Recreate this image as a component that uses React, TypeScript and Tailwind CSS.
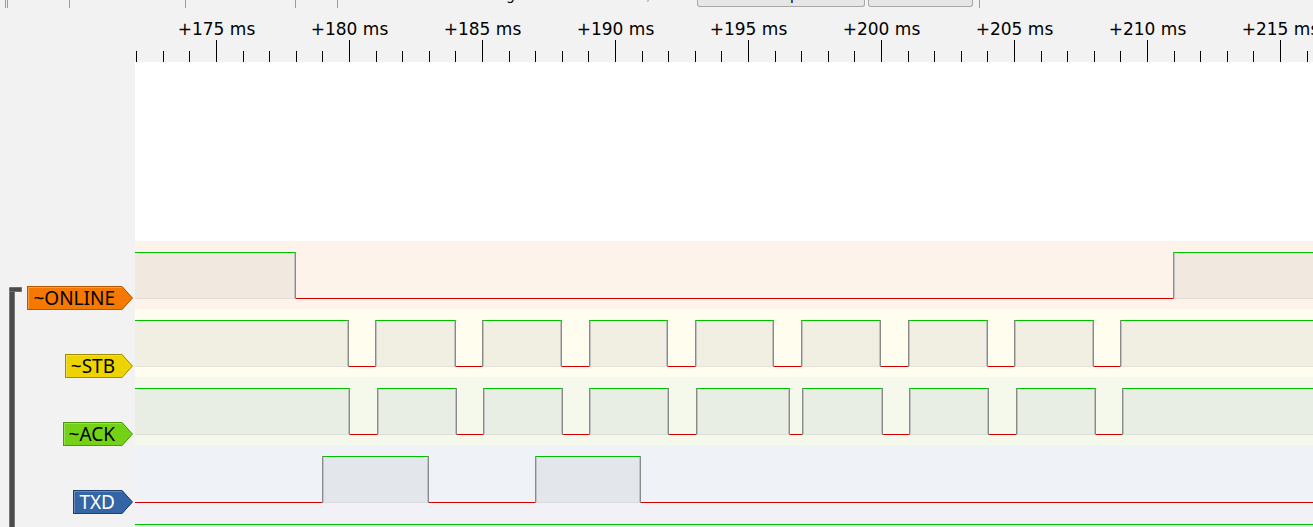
import React from "react";

const X0 = 135;
const XE = 1313;
const W = XE - X0;

type Seg = [number, number];

function complement(lows: Seg[]): Seg[] {
  const res: Seg[] = [];
  let cur = X0;
  for (const [a, b] of lows) {
    if (a > cur) res.push([cur, a]);
    cur = b;
  }
  if (cur < XE) res.push([cur, XE]);
  return res;
}

const GREEN = "#00c000";
const RED = "#d00000";

function Wave({ highs, fill, below }: { highs: Seg[]; fill: string; below?: string }) {
  const lows = complement(highs);
  return (
    <svg width={W} height={68} className="block">
      {below && <rect x={0} y={58} width={W} height={10} fill={below} />}
      {highs.map(([a, b], i) => {
        const x1 = a - X0;
        const x2 = b - X0;
        return (
          <g key={"h" + i}>
            <rect x={x1} y={11} width={x2 - x1} height={47} fill={fill} />
            <line x1={x1} x2={x2} y1={57.5} y2={57.5} stroke="rgba(0,0,0,0.05)" />
            <line x1={x1} x2={x2} y1={11.5} y2={11.5} stroke={GREEN} />
            {a > X0 && (
              <>
                <line x1={x1 + 0.5} x2={x1 + 0.5} y1={11} y2={58} stroke="#8a8a8a" />
                <line x1={x1 + 1.5} x2={x1 + 1.5} y1={12} y2={57} stroke="#c2c2c2" />
              </>
            )}
            {b < XE && (
              <>
                <line x1={x2 - 0.5} x2={x2 - 0.5} y1={11} y2={58} stroke="#8a8a8a" />
                <line x1={x2 - 1.5} x2={x2 - 1.5} y1={12} y2={57} stroke="#c2c2c2" />
              </>
            )}
          </g>
        );
      })}
      {lows.map(([a, b], i) => (
        <line key={"l" + i} x1={a - X0} x2={b - X0} y1={57.5} y2={57.5} stroke={RED} />
      ))}
    </svg>
  );
}

function Ruler() {
  const ticks: React.ReactNode[] = [];
  for (let t = 172; t <= 216; t++) {
    const xa = 216.5 + (t - 175) * 26.6;
    const x = Math.floor(xa) + 0.5 - X0;
    const major = t % 5 === 0;
    ticks.push(
      <line key={"t" + t} x1={x} x2={x} y1={major ? 32 : 43} y2={54} stroke="#000" />
    );
    if (major) {
      ticks.push(
        <text
          key={"l" + t}
          x={x}
          y={27}
          textAnchor="middle"
          fontSize={17}
          fill="#000"
          className="font-['DejaVu_Sans',sans-serif]"
        >
          {`+${t} ms`}
        </text>
      );
    }
  }
  return (
    <svg width={W} height={54} className="block">
      {ticks}
    </svg>
  );
}

function Tag({
  text,
  bg,
  border,
  color,
}: {
  text: string;
  bg: string;
  border: string;
  color: string;
}) {
  return (
    <div className="flex h-[24px]">
      <div
        className="h-[24px] flex items-center pl-[5px] pr-[7px] border-l border-t border-b text-[19px] leading-none font-['Noto_Sans',sans-serif] shadow-[inset_1px_1px_0_rgba(255,255,255,0.25)]"
        style={{ background: bg, borderColor: border, color }}
      >
        {text}
      </div>
      <svg width={11} height={24} className="block">
        <polygon points="0,0 0,24 10.5,12" fill={bg} />
        <polyline points="0,0.5 10.5,12 0,23.5" fill="none" stroke={border} />
      </svg>
    </div>
  );
}

function Sep() {
  return <div className="w-px h-[8px] bg-[#9d9d9d] shrink-0" />;
}

function Gap({ w }: { w: number }) {
  return <div className="shrink-0" style={{ width: w }} />;
}

export default function App() {
  const online: Seg[] = [
    [135, 296],
    [1173, 1313],
  ];
  const stb = complement([
    [349, 375],
    [456, 482],
    [562, 589],
    [668, 695],
    [774, 801],
    [881, 908],
    [988, 1014],
    [1094, 1120],
  ]);
  const ack = complement([
    [350, 377],
    [457, 483],
    [563, 589],
    [669, 696],
    [790, 802],
    [883, 909],
    [989, 1016],
    [1096, 1122],
  ]);
  const txd: Seg[] = [
    [322, 429],
    [535, 641],
  ];

  return (
    <div className="w-[1313px] h-[527px] overflow-hidden bg-[#f2f2f2] flex flex-col font-['DejaVu_Sans',sans-serif] text-black">
      {/* toolbar remnant */}
      <div className="h-[8px] flex items-start overflow-hidden shrink-0">
        <Gap w={5} />
        <Sep />
        <Gap w={1} />
        <Sep />
        <Gap w={61} />
        <Sep />
        <Gap w={115} />
        <Sep />
        <Gap w={109} />
        <Sep />
        <Gap w={41} />
        <Sep />
        <Gap w={168} />
        <div className="w-[10px] shrink-0 text-[14px] leading-[14px] -mt-[12px]">g</div>
        <Gap w={130} />
        <div className="w-[10px] shrink-0 text-[14px] leading-[14px] -mt-[12px] text-[#aaaaaa]">,</div>
        <Gap w={41} />
        <div className="w-[168px] h-[7px] shrink-0 border border-t-0 border-[#a8a8a8] rounded-b-[3px] bg-[#e6e6e6] flex overflow-hidden">
          <div className="ml-[92px] text-[14px] leading-[14px] -mt-[12px]">p</div>
        </div>
        <Gap w={3} />
        <div className="w-[105px] h-[7px] shrink-0 border border-t-0 border-[#a8a8a8] rounded-b-[3px] bg-[#e6e6e6]" />
        <Gap w={6} />
        <Sep />
      </div>

      {/* ruler */}
      <div className="h-[54px] flex shrink-0">
        <div className="w-[135px] shrink-0" />
        <Ruler />
      </div>

      {/* body */}
      <div className="flex flex-1 min-h-0">
        <div className="w-[135px] shrink-0 flex flex-col">
          <div className="h-[224px] shrink-0" />
          <div className="flex flex-1">
            <div className="ml-[9px] mt-[1px] w-[13px] shrink-0 flex flex-col">
              <div className="h-[5px] w-[13px] bg-[#4b4b4b] border border-[#6e6e6e] rounded-tl-[1px]" />
              <div className="flex-1 w-[6px] bg-[#4b4b4b] border-x border-[#7a7a7a]" />
            </div>
            <div className="flex-1 flex flex-col items-end gap-[44px] pr-[2px]">
              <Tag text="~ONLINE" bg="#f57900" border="#b35900" color="#000" />
              <Tag text="~STB" bg="#edd400" border="#a08c00" color="#000" />
              <Tag text="~ACK" bg="#73d216" border="#4e9a06" color="#000" />
              <Tag text="TXD" bg="#3465a4" border="#1f3f6e" color="#fff" />
            </div>
          </div>
        </div>
        <div className="flex-1 flex flex-col min-w-0">
          <div className="h-[179px] bg-white shrink-0" />
          <div className="h-[68px] bg-[#fdf3eb] shrink-0">
            <Wave highs={online} fill="#f1e8df" />
          </div>
          <div className="h-[68px] bg-[#fefdee] shrink-0">
            <Wave highs={stb} fill="#f1efe2" />
          </div>
          <div className="h-[68px] bg-[#f4f9ec] shrink-0">
            <Wave highs={ack} fill="#e8eee3" />
          </div>
          <div className="h-[68px] bg-[#eff2f7] shrink-0">
            <Wave highs={txd} fill="#e3e7ec" below="#f2f1f5" />
          </div>
          <div className="h-[68px] bg-[#f2f1f5] shrink-0">
            <Wave highs={[[135, 1313]]} fill="#e6e4ea" />
          </div>
        </div>
      </div>
    </div>
  );
}
